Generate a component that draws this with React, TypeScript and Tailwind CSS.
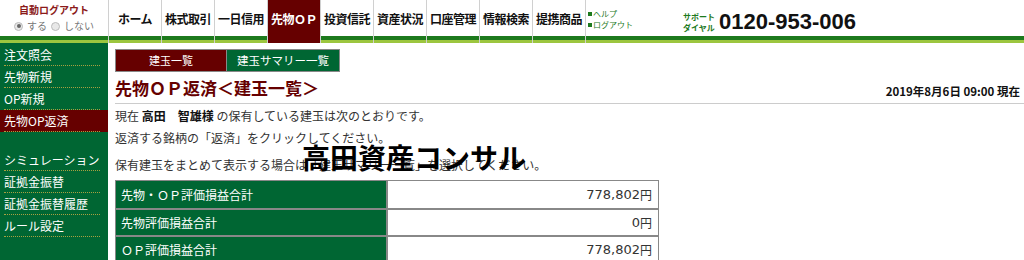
import React from "react";

const navItems = ["ホーム", "株式取引", "一日信用", "先物ＯＰ", "投資信託", "資産状況", "口座管理", "情報検索", "提携商品"];
const sideTop = ["注文照会", "先物新規", "OP新規", "先物OP返済"];
const sideBottom = ["シミュレーション", "証拠金振替", "証拠金振替履歴", "ルール設定"];
const rows = [
  ["先物・ＯＰ評価損益合計", "778,802", "円"],
  ["先物評価損益合計", "0", "円"],
  ["ＯＰ評価損益合計", "778,802", "円"],
];

function Band({ active }: { active?: boolean }) {
  return active ? (
    <div className="h-[7px] bg-[#660000]" />
  ) : (
    <>
      <div className="h-[4px] bg-[#1d7a1d]" />
      <div className="h-[3px] bg-[#9cc63f]" />
    </>
  );
}

export default function App() {
  return (
    <div className="w-[1024px] h-[260px] overflow-hidden bg-white text-[#333]" style={{ fontFamily: '"Noto Sans CJK JP", "Liberation Sans", sans-serif' }}>
      {/* Header */}
      <div className="flex h-[43px]">
        <div className="w-[109px] flex flex-col border-r border-[#d0d0d0]">
          <div className="h-[36px] flex flex-col items-center pt-[2px]">
            <div className="text-[10px] font-bold text-[#8b1a1a] leading-[16px]">自動ログアウト</div>
            <div className="flex items-center gap-[4px] text-[10px] text-[#777] leading-[16px]">
              <span className="w-[9px] h-[9px] rounded-full border border-[#bbb] bg-[#e8e8e8] flex items-center justify-center">
                <span className="w-[4px] h-[4px] rounded-full bg-[#666]" />
              </span>
              <span>する</span>
              <span className="w-[9px] h-[9px] rounded-full border border-[#bbb] bg-[#e8e8e8]" />
              <span>しない</span>
            </div>
          </div>
          <Band />
        </div>
        {navItems.map((n) => {
          const active = n === "先物ＯＰ";
          return (
            <div key={n} className={`w-[53px] flex flex-col border-r border-[#d0d0d0] ${active ? "bg-[#660000]" : ""}`}>
              <div className={`h-[36px] pt-[2px] flex items-center justify-center text-[12px] font-bold whitespace-nowrap tracking-[-0.5px] ${active ? "text-white" : "text-[#111]"}`}>
                {n}
              </div>
              <Band active={active} />
            </div>
          );
        })}
        <div className="flex-1 flex flex-col">
          <div className="h-[36px] flex items-center pt-[2px]">
            <div className="w-[97px] pl-[2px] text-[8px] leading-[11px] text-[#1d7a1d]">
              <div className="flex items-center gap-[1px]"><span className="w-[4px] h-[4px] bg-[#1d7a1d]" />ヘルプ</div>
              <div className="flex items-center gap-[1px]"><span className="w-[4px] h-[4px] bg-[#1d7a1d]" />ログアウト</div>
            </div>
            <div className="text-[8px] leading-[11px] text-[#1d7a1d] font-bold pt-[6px]">
              <div>サポート</div>
              <div>ダイヤル</div>
            </div>
            <div className="ml-[4px] pt-[6px] text-[22px] font-bold text-[#111] leading-[24px]" style={{ fontFamily: '"Liberation Sans", sans-serif' }}>0120-953-006</div>
          </div>
          <Band />
        </div>
      </div>

      <div className="flex">
        {/* Sidebar */}
        <div className="w-[108px] h-[217px] bg-[#006633] pt-[1px]">
          {sideTop.map((s) => (
            <div key={s} className={`h-[22px] relative ${s === "先物OP返済" ? "bg-[#660000]" : ""}`}>
              <div className="pl-[4px] text-[12px] leading-[21px] text-white">{s}</div>
              <div className="absolute left-[4px] right-[8px] bottom-0 border-b border-dotted border-[#a8a040]" />
            </div>
          ))}
          <div className="h-[17px]" />
          {sideBottom.map((s) => (
            <div key={s} className="h-[22px] relative">
              <div className="pl-[4px] text-[12px] leading-[21px] text-white">{s}</div>
              <div className="absolute left-[4px] right-[8px] bottom-0 border-b border-dotted border-[#a8a040]" />
            </div>
          ))}
        </div>

        {/* Content */}
        <div className="flex-1 pl-[7px] pt-[6px] relative">
          <div className="flex">
            <div className="w-[112px] h-[23px] bg-[#660000] border border-[#888] text-white text-[11px] flex items-center justify-center">建玉一覧</div>
            <div className="w-[113px] h-[23px] bg-[#006633] border border-l-0 border-[#888] text-white text-[11.5px] flex items-center justify-center">建玉サマリー一覧</div>
          </div>
          <div className="flex items-end justify-between border-b border-[#ccc] h-[32px] pb-[5px] pr-[4px]">
            <div className="text-[17px] font-bold text-[#660000] leading-[21px]">先物ＯＰ返済＜建玉一覧＞</div>
            <div className="text-[11.5px] font-bold text-[#111] leading-[14px]">2019年8月6日 09:00 現在</div>
          </div>
          <div className="text-[12px] text-[#333] leading-[22px] pt-[1px]">
            現在 <span className="font-bold text-[#111]">高田　智雄様</span> の保有している建玉は次のとおりです。
          </div>
          <div className="text-[12px] text-[#333] leading-[22px]">返済する銘柄の「返済」をクリックしてください。</div>
          <div className="text-[12px] text-[#333] leading-[22px] pt-[5px]">保有建玉をまとめて表示する場合は「建玉サマリー一覧」を選択してください。</div>
          <div className="absolute left-[194px] top-[97px] text-[28px] font-bold text-black leading-[34px]">高田資産コンサル</div>
          <div className="mt-[4px] w-[544px] border border-[#888]">
            {rows.map(([l, v, u], i) => (
              <div key={l} className={`flex h-[27px] ${i > 0 ? "border-t-2 border-[#888]" : ""}`}>
                <div className="w-[272px] bg-[#006633] text-white text-[12px] flex items-center pl-[5px] border-r-2 border-[#888]">{l}</div>
                <div className="flex-1 text-[12px] text-[#333] flex items-center justify-end pr-[6px]">
                  <span className="text-[13px]" style={{ fontFamily: '"DejaVu Sans", sans-serif' }}>{v}</span>
                  <span>{u}</span>
                </div>
              </div>
            ))}
          </div>
        </div>
      </div>
    </div>
  );
}
